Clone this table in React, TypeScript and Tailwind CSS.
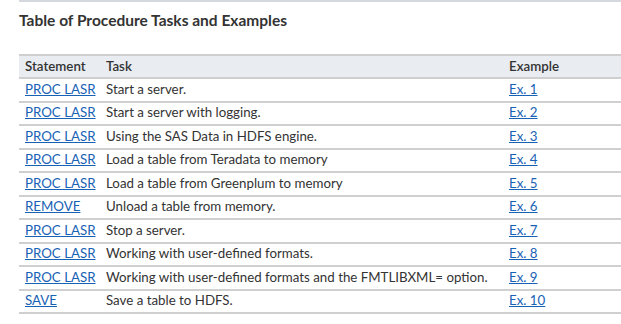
const rows = [
  ["PROC LASR", "Start a server.", "Ex. 1"],
  ["PROC LASR", "Start a server with logging.", "Ex. 2"],
  ["PROC LASR", "Using the SAS Data in HDFS engine.", "Ex. 3"],
  ["PROC LASR", "Load a table from Teradata to memory", "Ex. 4"],
  ["PROC LASR", "Load a table from Greenplum to memory", "Ex. 5"],
  ["REMOVE", "Unload a table from memory.", "Ex. 6"],
  ["PROC LASR", "Stop a server.", "Ex. 7"],
  ["PROC LASR", "Working with user-defined formats.", "Ex. 8"],
  ["PROC LASR", "Working with user-defined formats and the FMTLIBXML= option.", "Ex. 9"],
  ["SAVE", "Save a table to HDFS.", "Ex. 10"],
];

export default function App() {
  return (
    <div className="w-[621px] h-[324px] bg-white pl-[19px] font-['Lato',sans-serif] text-[#333]">
      <div className="border-t-2 border-[#d5d8de]" />
      <h2 className="mt-[8px] text-[15.5px] font-bold leading-5 text-[#333]">
        Table of Procedure Tasks and Examples
      </h2>
      <table className="mt-[24px] w-full table-fixed border-collapse text-[13.3px]">
        <colgroup>
          <col className="w-[87px]" />
          <col />
          <col className="w-[112px]" />
        </colgroup>
        <thead>
          <tr className="bg-[#e9ecf1] border-t-2 border-b-2 border-[#cfcfcf]">
            <th className="h-[23px] p-0 pl-[6px] text-left font-semibold">Statement</th>
            <th className="p-0 text-left font-semibold">Task</th>
            <th className="p-0 text-left font-semibold">Example</th>
          </tr>
        </thead>
        <tbody>
          {rows.map(([stmt, task, ex], i) => (
            <tr key={i} className="border-b-2 border-[#d0d0d0]">
              <td className="h-[23.5px] p-0 pl-[6px]">
                <a href="#" className="text-[#1862b5] underline">{stmt}</a>
              </td>
              <td className="p-0 whitespace-nowrap">{task}</td>
              <td className="p-0">
                <a href="#" className="text-[#1862b5] underline">{ex}</a>
              </td>
            </tr>
          ))}
        </tbody>
      </table>
    </div>
  );
}
